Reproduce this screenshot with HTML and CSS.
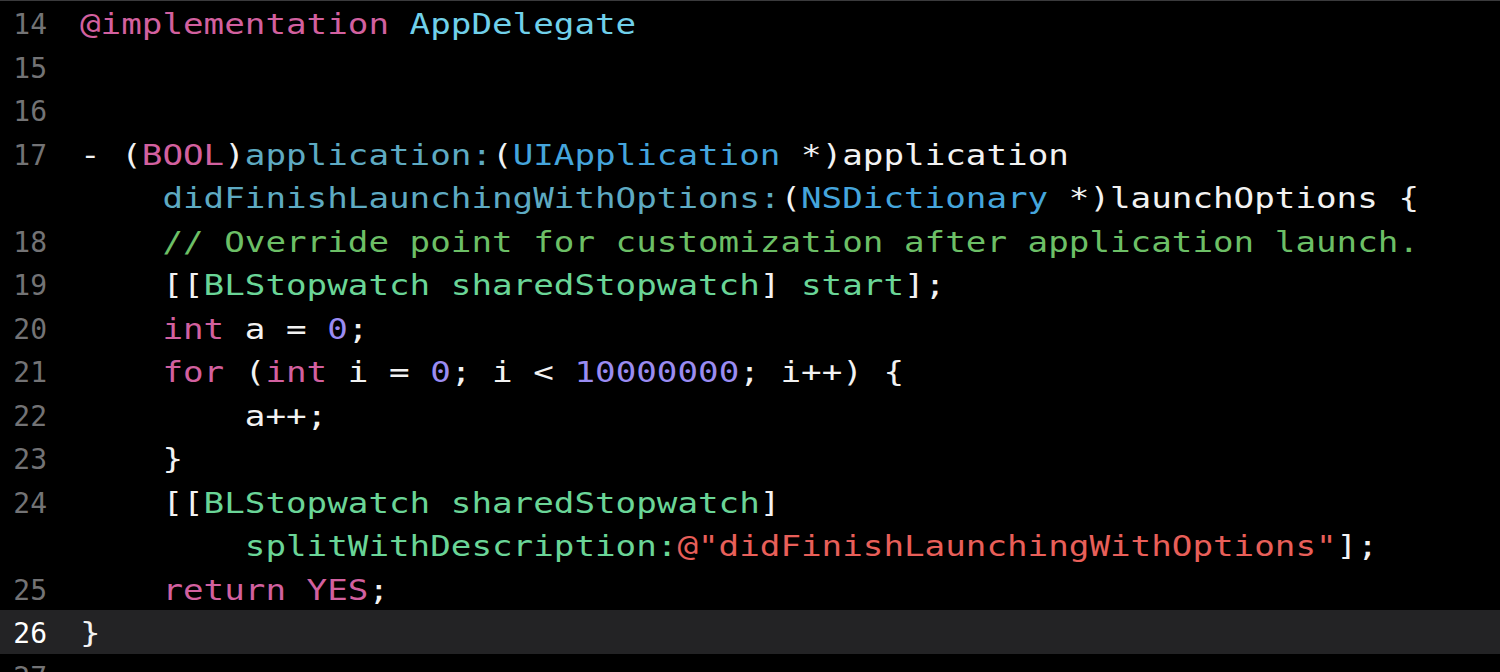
FILE: index.html
```html
<!DOCTYPE html>
<html lang="en">
<head>
  <meta charset="UTF-8" />
  <title>AppDelegate.m</title>
  <link rel="stylesheet" href="styles.css">
</head>
<body>

  <div class="editor">
    <div class="line"><span class="num">14</span><code class="src"><span class="kw">@implementation</span> <span class="cls">AppDelegate</span></code></div>
    <div class="line"><span class="num">15</span><code class="src"></code></div>
    <div class="line"><span class="num">16</span><code class="src"></code></div>
    <div class="line"><span class="num">17</span><code class="src">- (<span class="kw">BOOL</span>)<span class="meth">application:</span>(<span class="type">UIApplication</span> *)application</code></div>
    <div class="line"><span class="num"></span><code class="src">    <span class="meth">didFinishLaunchingWithOptions:</span>(<span class="type">NSDictionary</span> *)launchOptions {</code></div>
    <div class="line"><span class="num">18</span><code class="src">    <span class="comment">// Override point for customization after application launch.</span></code></div>
    <div class="line"><span class="num">19</span><code class="src">    [[<span class="call">BLStopwatch sharedStopwatch</span>] <span class="call">start</span>];</code></div>
    <div class="line"><span class="num">20</span><code class="src">    <span class="kw">int</span> a = <span class="lit">0</span>;</code></div>
    <div class="line"><span class="num">21</span><code class="src">    <span class="kw">for</span> (<span class="kw">int</span> i = <span class="lit">0</span>; i &lt; <span class="lit">10000000</span>; i++) {</code></div>
    <div class="line"><span class="num">22</span><code class="src">        a++;</code></div>
    <div class="line"><span class="num">23</span><code class="src">    }</code></div>
    <div class="line"><span class="num">24</span><code class="src">    [[<span class="call">BLStopwatch sharedStopwatch</span>]</code></div>
    <div class="line"><span class="num"></span><code class="src">        <span class="call">splitWithDescription:</span><span class="str">@"didFinishLaunchingWithOptions"</span>];</code></div>
    <div class="line"><span class="num">25</span><code class="src">    <span class="kw">return</span> <span class="kw">YES</span>;</code></div>
    <div class="line current"><span class="num">26</span><code class="src">}</code></div>
    <div class="line"><span class="num">27</span><code class="src"></code></div>
  </div>

</body>
</html>
```

FILE: styles.css
```css
body {
  margin: 0;
  padding: 0;
  background: #000;
  overflow: hidden;
}

.editor {
  border-top: 1px solid #3a3a3c;
  font-family: 'DejaVu Sans Mono', monospace;
  font-size: 28px;
  color: #f2f2f2;
}

.line {
  display: flex;
  height: 43.5px;
  line-height: 43.5px;
}

.line.current {
  background: #232325;
}

.num, .src {
  padding-top: 2px;
}

.num {
  width: 47px;
  padding-right: 33px;
  flex-shrink: 0;
  text-align: right;
  color: #737375;
}

.current .num {
  color: #fff;
}

.src {
  font-family: inherit;
  white-space: pre;
  transform: scaleX(1.222);
  transform-origin: left center;
}

.kw { color: #d2609f; }
.cls { color: #70d0ea; }
.meth { color: #5eaac2; }
.type { color: #45a5dc; }
.comment { color: #6cbf66; }
.call { color: #6ad597; }
.lit { color: #9a8cf2; }
.str { color: #e85f59; }
```
